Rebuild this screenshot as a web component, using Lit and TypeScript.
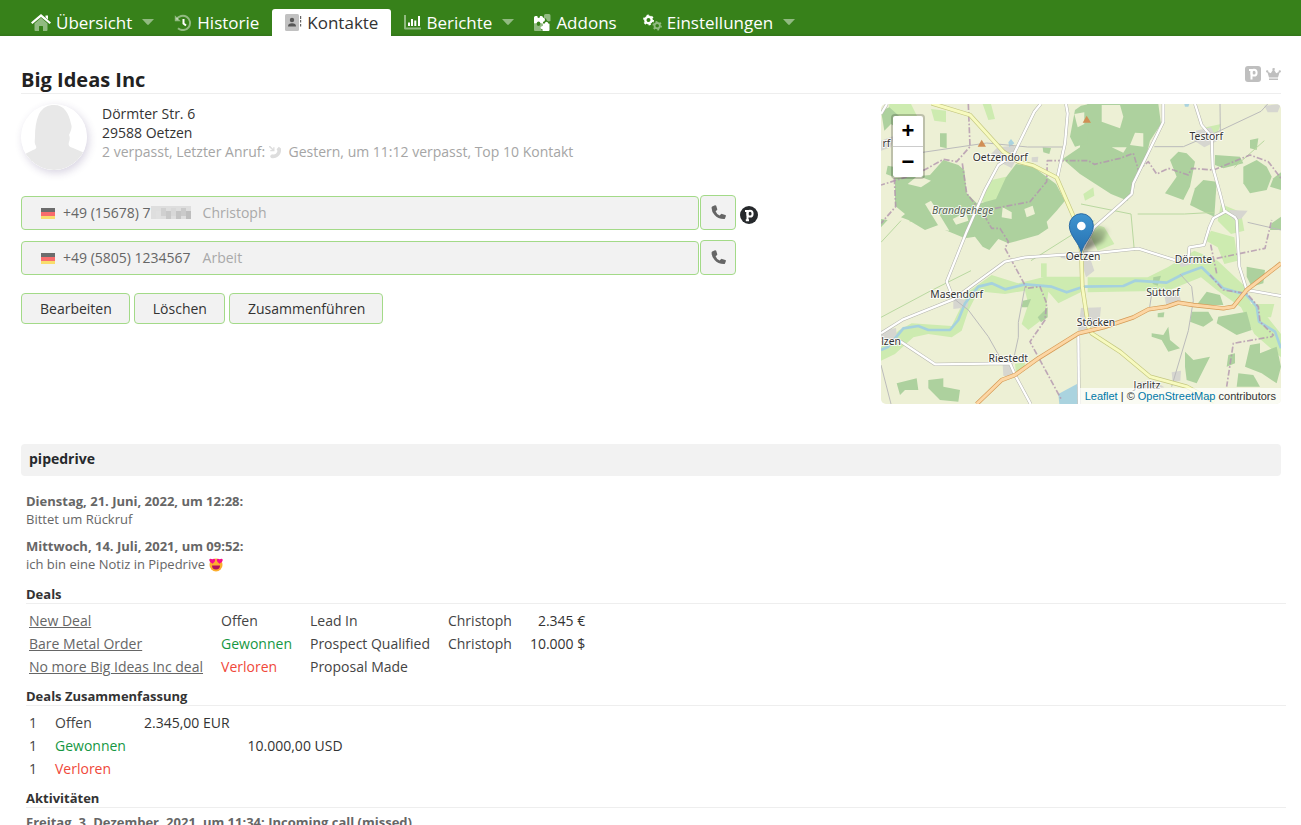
import { LitElement, html, svg, css, nothing } from "lit";
import { customElement } from "lit/decorators.js";
import { classMap } from "lit/directives/class-map.js";

const icons = {
  home: svg`<path opacity=".45" d="M3.500 9.500 10 3.800l6.500 5.700V16q0 1-1 1H12v-4.500q0-.5-.5-.5h-3q-.5 0-.5.500V17H4.500q-1 0-1-1z"/><path d="M10 0 20 8.600l-1.400 1.500L10 2.900 1.400 10.100 0 8.600l4-3.500z"/><path d="M14.500 1.500H17v4l-2.500-2.200z"/>`,
  history: svg`<g fill="none" stroke="currentColor" stroke-width="2"><path opacity=".45" d="M2.500 5.500A7.200 7.200 0 1 1 4 14.200"/><path d="M9.500 5v4.500l2.500 2"/></g><path opacity=".45" d="M.8 1.200v6h6z"/>`,
  contacts: svg`<path opacity=".3" d="M1.500 0h11Q14 0 14 1.500v14q0 1.500-1.500 1.500h-11Q0 17 0 15.500v-14Q0 0 1.500 0z"/><g opacity=".75"><circle cx="7" cy="6" r="2.200"/><path d="M3 12.500q0-3.300 4-3.300t4 3.300zM15 2h1.200v3H15zM15 6h1.200v2.500H15zM15 10h1.200v2.500H15z"/></g>`,
  chart: svg`<path opacity=".45" d="M0 1h2v12.500h15v2H1.200Q0 15.500 0 14.300z"/><path d="M4 8.500h2V12H4zM7 5h2v7H7zM10.300 6.500h2V12h-2zM14 2h2v10h-2z"/>`,
  addons: svg`<path opacity=".45" d="M10 1.500q0-1.500 1.500-1.500H15q1.500 0 1.500 1.500V7q-2 .8-3 0t-1.500-2.500L10 4zM0 9.500h2.500Q3 12 4.500 12T6.500 9.500H8V12q-1.500 1-1 2.500T8 17H1q-1 0-1-1z"/><path d="M0 3.500Q0 2 1.500 2h1.800q0 2 1.400 2T6 2h1.500Q9 2 9 3.500 11 4 11 5.700T9 8v1.500H6.600Q6 7.500 4.600 7.500T2.500 9.500H0zM8.500 9.500h2.300q.2-1.800 1.700-1.800t1.700 1.800H15q.5 0 .5.500v6q0 1-1 1h-6v-1.700q-2-.3-2-1.800t2-1.500z"/>`,
  gears: svg`<g fill="none" stroke="currentColor"><circle cx="5.500" cy="6" r="3.200" stroke-width="2.400"/><circle cx="5.500" cy="6" r="4.600" stroke-width="1.800" stroke-dasharray="2.100 2.717"/><g opacity=".45"><circle cx="14.200" cy="11.700" r="2.700" stroke-width="1.800"/><circle cx="14.200" cy="11.700" r="4" stroke-width="1.500" stroke-dasharray="1.800 2.389"/></g></g>`,
  phone: svg`<path d="M1.200 1.600 4 .3q.8-.2 1.200.5l1 3.300q.2.700-.4 1.200L4.600 6.200q1.200 3.200 4 4.300l1.300-1.300q.5-.5 1.200-.3l3.200 1q.8.400.6 1.100L14 13.600q-.3.500-1 .5Q6.800 13.800 3.600 10 .4 6.500.6 2.500q0-.6.600-.9z"/>`,
  missed: svg`<path d="M3 8.300q4 1.200 5.500-3.300L7.600 3.200 9.800.8 12 2.500Q12.500 8 9 10.500 6 13 2 12L1 10l2.200-1.900z"/><path d="M0 0h1.200l3 3V1.200h1.300v4H1.300V4H3.200L0 1z"/>`,
  crown: svg`<path d="M3 9.500 1.600 4.700Q0 4.500 0 3.300T1.200 2.200t1.200 1.100q0 .4-.2.700L4.800 5.200 6.800 2q-.6-.3-.6-1T7.500 0t1.300 1-.6 1L10.200 5.200 12.800 4q-.2-.3-.2-.7 0-1.100 1.200-1.100T15 3.300t-1.600 1.400L12 9.500zM3 10.500h9V12H3z"/>`,
};

const icon = (art: unknown, w: number, h: number, cls = "") =>
  html`<svg class=${cls} width=${w} height=${h} viewBox="0 0 ${w} ${h}" fill="currentColor" aria-hidden="true">${art}</svg>`;

const tabs = [
  { label: "Übersicht", art: icons.home, w: 20, menu: true },
  { label: "Historie", art: icons.history, w: 18 },
  { label: "Kontakte", art: icons.contacts, w: 17, active: true },
  { label: "Berichte", art: icons.chart, w: 17, menu: true },
  { label: "Addons", art: icons.addons, w: 17 },
  { label: "Einstellungen", art: icons.gears, w: 19, menu: true },
];

/* Map geometry, in a 1200 x 900 grid */
const meadows = [
  "262 563 332 513 412 538 492 518 602 518 602 563 532 598 502 563 492 640 442 678 422 660 442 600 432 560 372 570 292 562 262 620 242 680 212 700 142 690 97 700 42 750 0 770 0 730 52 680 92 658 212 666",
  "620 520 800 520 860 490 940 440 1010 470 1090 545 1110 600 1160 640 1200 690 1200 760 1120 690 1080 610 1010 560 960 520 860 560 620 565",
  "1020 300 1080 325 1090 380 1050 390 1010 350", "640 360 670 370 700 420 650 440 630 400",
  "322 230 375 218 377 280 337 310 300 290", "25 0 90 0 110 40 60 70 20 50", "150 15 195 20 195 55 160 50",
  "305 0 330 0 342 45 322 48", "100 320 142 318 132 345 85 355", "975 70 1020 60 1010 85 985 90",
  "607 270 637 250 640 275 612 290", "1110 600 1180 600 1170 640 1120 640", "402 780 432 775 430 800 405 808",
  "480 478 497 478 497 520 480 520", "990 380 1060 400 1070 470 1030 480 1010 430 975 410",
];
const forests = [
  "42 223 147 213 187 168 232 183 250 198 257 268 290 300 345 285 375 220 405 180 457 188 502 223 525 240 552 290 527 320 497 353 502 373 472 393 382 418 352 405 325 438 305 428 282 398 252 403 192 378 172 363 132 378 82 348 60 340 72 330 42 305",
  "620 0 832 0 840 60 807 110 790 180 757 238 740 290 690 270 597 210 545 165 597 130 600 20",
  "867 168 892 143 917 148 942 173 927 248 907 288 852 268 887 218", "942 253 967 228 1007 233 1000 338 977 328 927 303",
  "1087 188 1127 168 1157 188 1172 218 1157 258 1107 268 1087 238", "1002 153 1077 158 1087 178 1027 193 1002 183",
  "1177 223 1200 205 1200 258 1167 248", "1172 358 1200 338 1200 378 1167 378", "1107 108 1132 103 1127 138 1107 133",
  "977 563 1017 573 1027 603 947 603", "932 623 982 623 997 648 967 668 927 653", "1012 638 1097 623 1112 678 1067 693 1007 658",
  "912 743 937 768 987 758 967 798 947 838 917 828 912 788", "812 688 847 693 862 668 867 708 897 733 862 743 842 708 812 698",
  "1042 753 1062 748 1062 778 1037 788", "1107 723 1137 718 1137 748 1187 728 1200 788 1187 838 1142 808 1092 788",
  "1072 808 1117 813 1137 848 1067 848", "1097 488 1152 498 1147 538 1112 548 1097 518",
  "47 838 107 823 112 858 72 858 57 873", "142 828 187 823 187 848 237 858 232 893 177 888 142 853",
  "177 88 197 88 197 133 177 128", "567 98 582 18 600 5 625 0 620 118 582 128", "0 20 25 10 70 50 60 80 30 60 10 80",
  "0 370 20 348 0 345", "425 590 450 585 440 610 422 610", "817 520 840 515 830 545 815 540", "20 185 45 190 40 220 15 210",
  "485 130 510 132 505 150 487 145", "470 640 500 610 500 640 480 655", "830 628 850 625 848 640 830 640",
];
const clearings = [
  "662 3 717 3 727 38 717 73 662 53", "762 86 787 88 787 128 747 123", "692 130 737 130 727 146",
  "132 300 150 290 205 380 180 378", "215 345 255 325 262 350 225 362", "365 310 392 325 392 345 362 340",
  "430 315 455 305 462 330 437 340", "580 30 610 25 610 60 590 70", "110 215 150 230 120 250 80 240",
];
const suburbs = [
  "350 130 400 125 410 160 392 192 367 180 330 150", "452 160 472 158 470 175 452 173", "535 450 620 440 640 500 615 520 600 470 540 462",
  "945 80 990 70 1010 110 970 130 940 110", "217 580 262 590 260 610 217 615", "0 680 45 672 50 720 0 715",
  "365 780 395 780 402 820 367 815", "600 612 660 610 655 660 590 690", "850 575 895 570 900 592 855 600",
  "1045 318 1100 320 1080 345 1055 345", "887 455 940 455 940 478 900 490", "0 110 40 95 30 130 0 140",
  "1150 5 1200 0 1190 25 1160 25", "770 835 820 830 850 850 770 860", "872 805 900 800 898 830 875 835",
];
const borders = [
  "262 0 267 128 227 173 187 166 112 208 0 243", "40 223 44 308 0 358", "244 178 257 268 312 338 332 373 357 373 382 413 372 433 437 553 477 548 497 598 492 648 447 713 542 888",
  "342 313 447 293 497 233 499 170 622 170 640 181 717 163 757 148 772 198 802 173 827 210 862 193 922 213 932 193 997 198 1107 153 1162 173 1200 223",
  "989 422 1007 508", "1007 463 1152 433 1172 348", "987 513 1027 558 1097 568 1132 608 1137 653 1177 693 1172 698 1057 718 1037 848",
];
const tracks = [
  "125 145 317 117 440 129 545 129", "820 128 907 128 1000 88 1140 22 1160 0", "1017 0 1018 85", "217 583 262 618 322 698 367 778",
  "432 548 412 655 412 700 395 778", "897 510 932 548 937 590 922 680 872 848", "805 616 812 570", "0 783 30 900", "1100 355 1200 378",
];
const paths = ["0 640 150 560 270 500", "0 415 60 350", "600 300 750 330 760 440", "770 330 910 330 1000 325", "450 470 640 350", "1060 190 1150 110"];
const roads = [
  "479 0 460 23 397 153 352 183 312 258 257 383 197 533 217 583", "555 0 560 28 552 118 529 221",
  "847 0 847 53 757 238 752 270 727 293 640 370 602 443", "942 0 962 63 992 98 995 188 1017 268 1030 320 1062 340 1067 348 1075 488 1097 558 1200 576",
  "1037 321 997 343 985 370 969 423 925 430 922 465", "0 688 67 646 217 586 372 473 432 460 580 450 657 446 772 434 887 470",
  "0 708 52 708 162 781 387 778 402 813 449 900", "592 688 594 900", "0 30 18 0",
];
const yellow = "152 -2 267 33 367 143 412 173 457 185 527 221 582 348 601 443 602 488 604 548 622 668 632 688 717 743 807 818 917 848 1000 893";
const orange = "287 900 362 828 402 813 472 763 592 688 667 670 757 640 802 616 857 608 892 596 937 603 1027 613 1057 608 1097 558 1200 478";
const river = "0 738 22 728 67 673 112 666 142 678 207 678 232 648 252 598 292 548 332 538 372 556 432 541 512 548 557 565 607 548 727 546 762 530 857 536 907 510 962 490 1007 533 1027 553 1097 573 1127 608 1134 653 1182 683 1200 733";
const places: [string, number, number, string?][] = [
  ["Oetzendorf", 358, 170], ["Testorf", 976, 107], ["Brandgehege", 245, 331, "wood"], ["Oetzen", 606, 467], ["Masendorf", 227, 582],
  ["Dörmte", 937, 477], ["Süttorf", 846, 575], ["Stöcken", 645, 667], ["Riestedt", 382, 773], ["Jarlitz", 798, 855],
  ["lzen", 30, 722], ["rf", 16, 128],
];

const poly = (list: string[], cls: string) => list.map((p) => svg`<polygon class=${cls} points=${p} />`);
const lines = (list: string[], cls: string) => list.map((p) => svg`<polyline class=${cls} points=${p} />`);

@customElement("contact-map")
class ContactMap extends LitElement {
  static styles = css`
    :host { display: block; position: relative; width: 400px; height: 300px; border-radius: 5px; overflow: hidden; background: #edf0d5; }
    .tiles { display: block; width: 100%; height: 100%; }
    .meadow { fill: #cdebb0; }
    .forest { fill: #add19e; }
    .clearing { fill: #edf0d5; }
    .suburb { fill: #d6d6d0; }
    .water { fill: #aad3df; }
    polyline { fill: none; stroke-linejoin: round; }
    .river { stroke: #a5d1de; stroke-width: 8; }
    .border { stroke: #b295ae; stroke-width: 5; stroke-dasharray: 18 6 5 6; opacity: 0.8; }
    .track { stroke: #bbb; stroke-width: 3; }
    .path { stroke: #b9d8a0; stroke-width: 3; }
    .case { stroke: #b5b5b0; stroke-width: 10; }
    .road { stroke: #fff; stroke-width: 7; }
    .yellow-case { stroke: #c5c880; stroke-width: 13; }
    .yellow { stroke: #f7fabf; stroke-width: 9; }
    .orange-case { stroke: #d59a55; stroke-width: 13; }
    .orange { stroke: #fcd6a4; stroke-width: 9; }
    .peak { fill: #d08f55; }
    .place { font: 31px "Noto Sans", sans-serif; fill: #333; text-anchor: middle; stroke: #fff; stroke-opacity: 0.8; stroke-width: 6; paint-order: stroke; stroke-linejoin: round; }
    .wood { font-style: italic; fill: #555f50; }
    .zoom { position: absolute; top: 10px; left: 10px; border: 2px solid rgba(0, 0, 0, 0.2); border-radius: 4px; background-clip: padding-box; background-color: #fff; }
    .step { display: block; width: 30px; height: 30px; padding: 0; border: 0; background: none; font: bold 22px/30px "Liberation Sans", sans-serif; color: #000; }
    .step + .step { height: 31px; border-top: 1px solid #ccc; }
    .credit { position: absolute; right: 0; bottom: 0; padding: 0 5px; background: rgba(255, 255, 255, 0.7); font: 11px/16px "Liberation Sans", sans-serif; color: #333; }
    .credit a { color: #0078a8; text-decoration: none; }
  `;

  render() {
    return html`
      <svg class="tiles" viewBox="0 0 1200 900" preserveAspectRatio="xMidYMid slice" role="img" aria-label="Karte von Oetzen">
        <defs>
          <linearGradient id="pin" x2="0" y2="1"><stop offset="0" stop-color="#3f95d0" /><stop offset="1" stop-color="#2670b0" /></linearGradient>
          <linearGradient id="fade" x1="0" y1="1" x2="1" y2="0"><stop offset="0" stop-opacity=".6" /><stop offset="1" stop-opacity=".1" /></linearGradient>
          <filter id="soft" x="-50%" y="-50%" width="200%" height="200%"><feGaussianBlur stdDeviation="6" /></filter>
        </defs>
        ${poly(meadows, "meadow")} ${poly(forests, "forest")} ${poly(clearings, "clearing")} ${poly(suburbs, "suburb")}
        ${poly(["535 900 532 870 592 838 592 900", "390 105 400 118 385 130 382 115", "910 0 925 0 922 8 912 8"], "water")}
        ${lines([river], "river")} ${lines(paths, "path")} ${lines(tracks, "track")} ${lines(borders, "border")}
        ${lines(roads, "case")} ${lines(roads, "road")}
        ${lines([yellow], "yellow-case")} ${lines([yellow], "yellow")}
        ${lines([orange], "orange-case")} ${lines([orange], "orange")}
        ${poly(["290 128 302 107 315 128", "605 56 617 35 630 56"], "peak")}
        ${places.map(([name, x, y, cls]) => svg`<text class="place ${cls ?? ""}" x=${x} y=${y}>${name}</text>`)}
        <path d="M602 446 625 385 655 368 682 378 668 412z" fill="url(#fade)" filter="url(#soft)" />
        <path d="M601 446C594 415 565 395 565 365a36 36 0 0 1 72 0c0 30-29 50-36 81z" fill="url(#pin)" stroke="#2a6ba5" stroke-width="3" />
        <circle cx="601" cy="366" r="13" fill="#fff" />
      </svg>
      <div class="zoom">
        <button class="step" aria-label="Vergrößern">+</button>
        <button class="step" aria-label="Verkleinern">−</button>
      </div>
      <div class="credit"><a href="#leaflet">Leaflet</a> | © <a href="#osm">OpenStreetMap</a> contributors</div>
    `;
  }
}

@customElement("app-root")
class AppRoot extends LitElement {
  static styles = css`
    :host { display: block; height: 100vh; overflow: hidden; background: #fff; font: 14px/19px "Open Sans", sans-serif; color: #333; }
    * { box-sizing: border-box; }
    a { color: inherit; }
    button { font: inherit; color: inherit; }
    .nav { display: flex; align-items: flex-end; height: 36px; padding-left: 18px; background: linear-gradient(#37811a 92%, #33751a); }
    .tab { display: flex; align-items: center; gap: 5px; height: 27px; padding: 0 13px; border-radius: 3px 3px 0 0; font-size: 17px; color: #fff; text-decoration: none; white-space: nowrap; }
    .tab.menu { padding-right: 7px; }
    .tab.active { background: #fff; color: #333; }
    .caret { margin-left: 5px; opacity: 0.45; }
    .page { padding: 30px 20px 0 21px; }
    .head { display: flex; align-items: center; justify-content: space-between; height: 28px; border-bottom: 1px solid #eee; }
    .title { margin: 0; font-size: 20px; line-height: 28px; font-weight: 700; color: #222; }
    .badges { display: flex; align-items: center; gap: 5px; padding-bottom: 12px; color: #bfbfbf; }
    .main { display: flex; justify-content: space-between; gap: 20px; padding-top: 10px; }
    .details { flex: 0 1 740px; }
    .person { display: flex; gap: 15px; height: 91px; }
    .avatar { flex: none; width: 66px; height: 66px; border-radius: 50%; box-shadow: 2px 3px 8px rgba(60, 40, 110, 0.2); }
    .muted { color: #a5a5a5; }
    .missed { margin-right: 3px; vertical-align: -2px; color: #ddd; }
    .phone { display: flex; align-items: flex-end; gap: 1px; height: 35px; margin-bottom: 10px; }
    .number { flex: 0 1 678px; display: flex; align-items: center; height: 34px; padding: 0 19px 2px; border: 1px solid #a3da88; border-radius: 4px; background: #f2f2f2; color: #666; text-decoration: none; }
    .flag { margin: 2px 8px 0 0; opacity: 0.55; }
    .kind { margin-left: 12px; color: #a9a9a9; }
    .call { display: grid; place-items: center; width: 36px; height: 35px; padding: 0; border: 1px solid #a3da88; border-radius: 4px; background: #f2f2f2; color: #666; }
    .mark { align-self: center; margin: 4px 0 0 3px; }
    .actions { display: flex; gap: 4px; margin-top: 18px; }
    .action { height: 31px; padding: 0 17px 0 18px; border: 1px solid #a3da88; border-radius: 4px; background: #f2f2f2; line-height: 29px; }
    .bar { height: 32px; margin-top: 40px; padding-left: 8px; border-radius: 4px; background: #f2f2f2; font-size: 14px; line-height: 29px; font-weight: 700; color: #26292c; }
    .crm { margin: 16px -5px 0 5px; }
    .note { margin: 0 0 9px; font-size: 13px; line-height: 18px; color: #666; }
    .emoji { margin-left: 1px; vertical-align: -3px; }
    .when { display: block; font-weight: 700; }
    .section { margin: 9px 0 5px; border-bottom: 1px solid #eee; font-size: 13px; line-height: 18px; font-weight: 700; color: #333; }
    .note + .section { margin-top: 12px; }
    table { border-collapse: collapse; }
    td { padding: 2px 15px 2px 3px; white-space: nowrap; text-align: left; color: #444; }
    td.amount { text-align: right; color: #333; }
    .link { color: #666; }
    td.won { color: #159743; }
    td.lost { color: #f0483a; }
  `;

  private caret() {
    return icon(svg`<path d="M0 0h12L6.800 5.600q-.8.700-1.600 0z"/>`, 12, 7, "caret");
  }

  private phone(number: string, kind: string, hidden: boolean) {
    const blocks = ["#e0e0e0", "#d0d0d0", "#c8c8c8", "#d8d8d8", "#c4c4c4", "#cacaca", "#bebebe"];
    return html`<div class="phone">
      <a class="number" href="#call">
        ${icon(svg`<path fill="#000" d="M0 0h14v4H0z"/><path fill="#f00" d="M0 4h14v4H0z"/><path fill="#fc0" d="M0 8h14v3H0z"/>`, 14, 11, "flag")}
        <span>${number}</span>
        ${hidden ? icon(svg`<rect width="40" height="13" fill="#dedede"/>${blocks.map((c, i) => svg`<rect x=${5 + i * 5} y=${i % 2 ? 2 : 5} width="5" height="8" fill=${c}/>`)}`, 40, 13) : nothing}
        <span class="kind">${kind}</span>
      </a>
      <button class="call" aria-label="Anrufen">${icon(icons.phone, 15, 15)}</button>
      ${hidden
        ? html`<svg class="mark" width="18" height="18" viewBox="0 0 18 18" role="img" aria-label="Pipedrive"><circle cx="9" cy="9" r="9" fill="#26292c"/><g fill="none" stroke="#fff" stroke-width="2"><path d="M5 5h2.500v9.500M5.800 14.300H9"/><ellipse cx="10" cy="7.700" rx="2.600" ry="2.900"/></g></svg>`
        : nothing}
    </div>`;
  }

  render() {
    const deals = [
      ["New Deal", "Offen", "", "Lead In", "Christoph", "2.345 €"],
      ["Bare Metal Order", "Gewonnen", "won", "Prospect Qualified", "Christoph", "10.000 $"],
      ["No more Big Ideas Inc deal", "Verloren", "lost", "Proposal Made", "", ""],
    ];
    const sums = [["Offen", "", "2.345,00 EUR", ""], ["Gewonnen", "won", "", "10.000,00 USD"], ["Verloren", "lost", "", ""]];
    return html`
      <nav class="nav">
        ${tabs.map((t) => html`<a class=${classMap({ tab: true, menu: !!t.menu, active: !!t.active })} href="#tab">${icon(t.art, t.w, 17)}<span>${t.label}</span>${t.menu ? this.caret() : nothing}</a>`)}
      </nav>
      <main class="page">
        <header class="head">
          <h1 class="title">Big Ideas Inc</h1>
          <div class="badges">
            ${icon(svg`<rect width="16" height="16" rx="3"/><g fill="none" stroke="#fff" stroke-width="2"><path d="M4 4h2.500v9.500"/><ellipse cx="9" cy="6.700" rx="2.600" ry="2.900"/></g>`, 16, 16)}
            ${icon(icons.crown, 15, 12)}
          </div>
        </header>
        <div class="main">
          <div class="details">
            <div class="person">
              <svg class="avatar" viewBox="0 0 66 66" aria-hidden="true"><clipPath id="round"><circle cx="33" cy="33" r="33"/></clipPath><g clip-path="url(#round)"><rect width="66" height="66" fill="#fff"/><path fill="#e8e8e8" d="M33 1c-6 0-11 2-15 9-3 7-4 14-4 22 0 4-1 7 1 10 1 3-1 3-3 4L0 52v14h66V50l-14-6c-4-1-5-3-4-6 1-3 1-5 0-7 3-6 3-9 2-11C48 9 43 1 33 1z"/></g></svg>
              <div>
                <div>Dörmter Str. 6</div>
                <div>29588 Oetzen</div>
                <div class="muted">2 verpasst, Letzter Anruf: ${icon(icons.missed, 13, 13, "missed")} Gestern, um 11:12 verpasst, Top 10 Kontakt</div>
              </div>
            </div>
            ${this.phone("+49 (15678) 7", "Christoph", true)} ${this.phone("+49 (5805) 1234567", "Arbeit", false)}
            <div class="actions">
              <button class="action">Bearbeiten</button>
              <button class="action">Löschen</button>
              <button class="action">Zusammenführen</button>
            </div>
          </div>
          <contact-map></contact-map>
        </div>
        <div class="bar">pipedrive</div>
        <section class="crm">
          <p class="note"><span class="when">Dienstag, 21. Juni, 2022, um 12:28:</span>Bittet um Rückruf</p>
          <p class="note">
            <span class="when">Mittwoch, 14. Juli, 2021, um 09:52:</span>ich bin eine Notiz in Pipedrive
            ${icon(svg`<circle cx="7" cy="7" r="6.500" fill="#fcae2e"/><path fill="#b5105c" d="M3 7.500h8q0 4-4 4t-4-4z"/><path fill="#f5108c" d="M3.500 5.800Q0 4 .2 1.800 1-.2 3.300 1.300 5.800-.2 6.300 2 6 4 3.500 5.800zM10.500 5.800Q14 4 13.800 1.800 13-.2 10.700 1.300 8.200-.2 7.700 2 8 4 10.500 5.800z"/>`, 14, 14, "emoji")}
          </p>
          <h2 class="section">Deals</h2>
          <table>
            ${deals.map(([name, state, cls, stage, owner, sum]) => html`<tr><td><a class="link" href="#deal">${name}</a></td><td class=${cls}>${state}</td><td>${stage}</td><td>${owner}</td><td class="amount">${sum}</td></tr>`)}
          </table>
          <h2 class="section">Deals Zusammenfassung</h2>
          <table>
            ${sums.map(([state, cls, eur, usd]) => html`<tr><td>1</td><td class=${cls}>${state}</td><td class="amount">${eur}</td><td class="amount">${usd}</td></tr>`)}
          </table>
          <h2 class="section">Aktivitäten</h2>
          <p class="note"><span class="when">Freitag, 3. Dezember, 2021, um 11:34: Incoming call (missed)</span></p>
        </section>
      </main>
    `;
  }
}
